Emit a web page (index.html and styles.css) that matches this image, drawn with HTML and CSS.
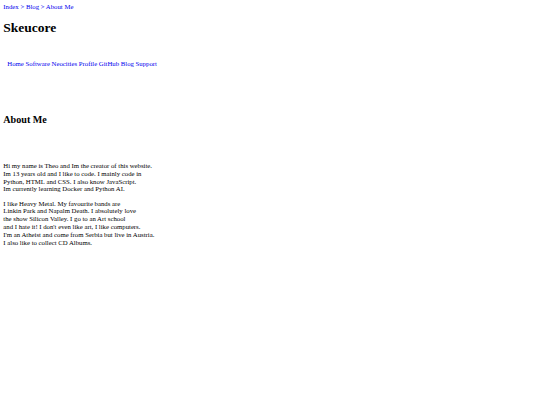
FILE: index.html
```html
<!DOCTYPE html>
<html>
<head>
<meta charset="utf-8">
<title>About Me</title>
<link rel="stylesheet" href="styles.css">
</head>
<body>
<div class="crumbs"><a href="#">Index</a> &gt; <a href="#">Blog</a> &gt; <a href="#">About Me</a></div>
<h1 class="title">Skeucore</h1>
<nav class="nav">
<a href="#">Home</a> <a href="#">Software</a> <a href="#">Neocities</a> <a href="#">Profile</a> <a href="#">GitHub</a> <a href="#">Blog</a> <a href="#">Support</a>
</nav>
<h2 class="heading">About Me</h2>
<p class="text">Hi my name is Theo and Im the creator of this website.<br>Im 13 years old and I like to code. I mainly code in<br>Python, HTML and CSS. I also know JavaScript.<br>Im currently learning Docker and Python AI.</p>
<p class="text">I like Heavy Metal. My favourite bands are<br>Linkin Park and Napalm Death. I absolutely love<br>the show Silicon Valley. I go to an Art school<br>and I hate it! I don't even like art, I like computers.<br>I'm an Atheist and come from Serbia but live in Austria.<br>I also like to collect CD Albums.</p>
</body>
</html>
```
FILE: styles.css
```css
html {
  font-family: "Liberation Serif", "Times New Roman", serif;
  font-size: 6.75px;
  line-height: 7.8px;
  background: #fff;
  color: #000;
}
body {
  margin: 3.33px;
}
a {
  color: #0000ee;
  text-decoration: none;
}
.crumbs {
  color: #0000ee;
}
.title {
  font-size: 13.5px;
  line-height: 15.5px;
  margin: 8.9px 0;
}
.nav {
  margin: 24px 0 0 4px;
}
.heading {
  font-size: 10.1px;
  line-height: 11.6px;
  margin: 47px 0 0;
}
.text {
  margin: 36px 0 0;
}
.text + .text {
  margin-top: 6.6px;
}
```
